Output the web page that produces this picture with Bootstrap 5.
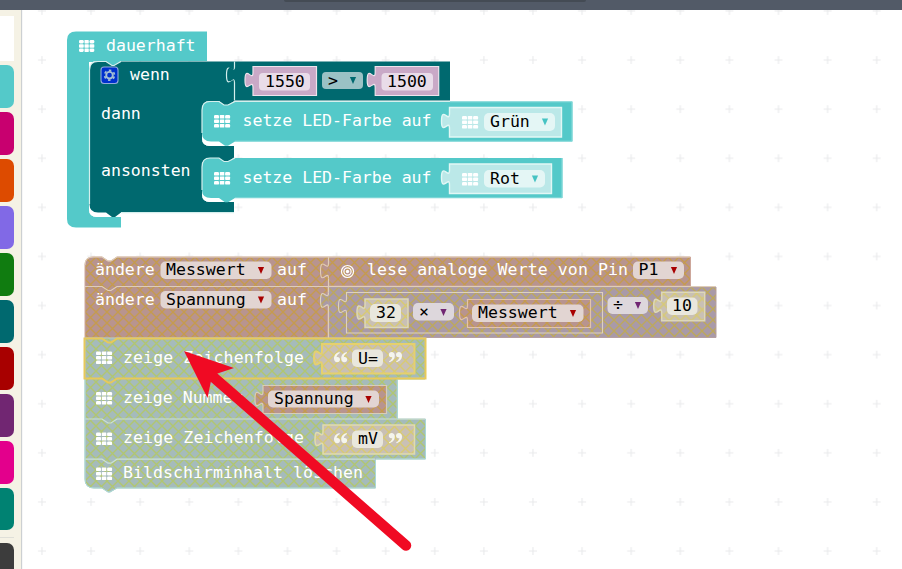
<!DOCTYPE html>
<html lang="de">
<head>
<meta charset="utf-8">
<title>Blockeditor</title>
<link href="https://cdn.jsdelivr.net/npm/bootstrap@5.3.0/dist/css/bootstrap.min.css" rel="stylesheet">
<style>
body{background:#fff}
.topbar{height:10px;background:#525a67;padding-left:284px}
.topbar-tab{width:302px;height:2px;background:#444b54;border-radius:0 0 4px 4px}
.toolbox{width:21px;background:#f5f2e5;box-shadow:1px 0 1px #ccd0d2;padding-top:6px;z-index:1}
.toolbox-search{width:14px;height:45px;margin-bottom:4px;background:#fff}
.cat{width:14px;height:43px;margin-bottom:4px;border-radius:0 7px 7px 0;flex:none}
.c1{background:#54c9c9}.c2{background:#c8006f}.c3{background:#dd4b00}.c4{background:#8169e6}
.c5{background:#107c10}.c6{background:#00696f}.c7{background:#a80000}.c8{background:#712672}
.c9{background:#e3008c}.c10{background:#008272;height:42px}.c11{background:linear-gradient(80deg,#d87a3c 1px,#3c3c3c 2px)}
.rule{width:14px;height:1px;background:#dfdfd8;margin:3px 0 5px;flex:none}
svg text{font-family:"DejaVu Sans Mono",monospace;font-size:16.55px;fill:#fff;white-space:pre}
svg .dark text,svg text.dark{fill:#000}
.teal{fill:#54c9c9}.logic{fill:#00696f}
.pink{fill:#c9a9c7;stroke:#efe3ec;stroke-width:1.2}
.mint{fill:#bbe8e8;stroke:#e2f7f5;stroke-width:1.4}
.edge{fill:none;stroke:#d5efed;stroke-width:1.2}
.hot{fill:none;stroke:#e8c95a;stroke-width:2}
</style>
<script src="https://cdn.jsdelivr.net/npm/bootstrap@5.3.0/dist/js/bootstrap.bundle.min.js"></script>
</head>
<body class="vh-100 overflow-hidden d-flex flex-column">
<header class="topbar d-flex flex-shrink-0"><div class="topbar-tab"></div></header>
<main class="d-flex flex-grow-1 overflow-hidden">
<nav class="toolbox d-flex flex-column flex-shrink-0" aria-label="Kategorien">
<div class="toolbox-search flex-shrink-0"></div>
<div class="cat c1"></div><div class="cat c2"></div><div class="cat c3"></div><div class="cat c4"></div><div class="cat c5"></div><div class="cat c6"></div><div class="cat c7"></div><div class="cat c8"></div><div class="cat c9"></div><div class="cat c10"></div>
<div class="rule"></div><div class="cat c11"></div>
</nav>
<svg class="flex-shrink-0 d-block" width="881" height="559" viewBox="21 10 881 559">
<defs>
<pattern id="grid" x="17.5" y="35.5" width="49.1" height="49.1" patternUnits="userSpaceOnUse"><path d="M20.5 24.5h8M24.5 20.5v8" stroke="#e9eaeb" stroke-width="1.1"/></pattern>
<pattern id="hBrown" x="85" y="257" width="11" height="11" patternUnits="userSpaceOnUse"><rect width="11" height="11" fill="#b8948f"/><path d="M-1 -1L12 12M12 -1L-1 12" stroke="#c59b4e" stroke-width="1.4"/></pattern>
<pattern id="hPurple" x="328" y="287" width="11" height="11" patternUnits="userSpaceOnUse"><rect width="11" height="11" fill="#a99aa8"/><path d="M-1 -1L12 12M12 -1L-1 12" stroke="#bda85c" stroke-width="1.4"/></pattern>
<pattern id="hGreen" x="85" y="338" width="11" height="11" patternUnits="userSpaceOnUse"><rect width="11" height="11" fill="#a5bbbb"/><path d="M-1 -1L12 12M12 -1L-1 12" stroke="#b1c671" stroke-width="1.4"/></pattern>
<pattern id="hSand" x="323" y="344" width="11" height="11" patternUnits="userSpaceOnUse"><rect width="11" height="11" fill="#c9c0b5"/><path d="M-1 -1L12 12M12 -1L-1 12" stroke="#d8ca72" stroke-width="1.4"/></pattern>
<g id="leds" fill="#fff"><rect width="5" height="3.6" rx="1.2"/><rect x="5.8" width="4.5" height="3.6" rx=".5"/><rect x="11.1" width="5" height="3.6" rx="1.2"/><rect y="4.5" width="5" height="3.6" rx=".8"/><rect x="5.8" y="4.5" width="4.5" height="3.6" rx=".5"/><rect x="11.1" y="4.5" width="5" height="3.6" rx=".8"/><rect y="9" width="5" height="3.6" rx="1.2"/><rect x="5.8" y="9" width="4.5" height="3.6" rx=".5"/><rect x="11.1" y="9" width="5" height="3.6" rx="1.2"/></g>
<path id="caret" d="M-3.1 -3.4H3.1L0 3.6Z"/>
<!-- puzzle tab: origin is the block's upper-left corner -->
<path id="tab" d="M0 5.500c0 10 -8 -8 -8 8s8 -2.500 8 7.500"/>
<g id="quotes" fill="#f5f5ee"><path id="q" d="M5.500 0C1.500 1 0 3.500 0 6.600C0 9 1.300 10.200 3.200 10.200C5 10.200 6 9 6 7.500C6 6 5 5 3.500 5C3.100 5 2.800 5 2.600 5.200C2.700 3.500 3.700 2 5.800 .9Z"/><use href="#q" x="7.200"/><g transform="translate(68 10.200) rotate(180)"><use href="#q"/><use href="#q" x="7.200"/></g></g>
</defs>
<rect x="21" y="10" width="881" height="559" fill="url(#grid)"/>

<!-- forever loop -->
<path class="teal" d="M67 40Q67 31.500 76 31.500H207V61H121L114.500 65.500H111.500L106 61H97Q89 61 89 69V209Q89 217 97 217H121V227.500H76Q67 227.500 67 219Z"/>
<use href="#leds" transform="translate(79 40) scale(.95)"/><text x="106" y="51">dauerhaft</text>
<path fill="#fff" d="M89 62V209Q89 217 97 217H107V211H95V62Z"/>
<path class="logic" d="M89.500 70Q89.500 61.500 98 61.500H106L112 65.500H114L121 61.500H450V100.500H235L228 105H224L219 101H210Q202 101 202 110V138Q202 146 210 146H234V157.500L228 162H224L219 158H210Q202 158 202 166V194Q202 202 210 202H234V212.500H121L115 217H112L106 212.500H98Q89.500 212.500 89.500 204Z"/>
<path class="edge" d="M89.500 204V70Q89.500 61.500 98 61.500H106L112 65.500H114L121 61.500M234.500 61.500V67c0 10 -8 -8 -8 8s8 -2.500 8 7.500V100.500M121 212.700H234"/>
<path d="M235 66.500c0 10 -7 -8 -7 8s7 -2.500 7 8.500Z" fill="#00696f"/>
<rect x="101" y="67" width="17" height="16.500" rx="3" fill="#0031cd" stroke="#91a9dc" stroke-width="1.100"/>
<g fill="none" stroke="#a5bfd3"><circle cx="109.500" cy="75.200" r="3.300" stroke-width="1.900"/><circle cx="109.500" cy="75.200" r="4.900" stroke-width="1.700" stroke-dasharray="2.500 2.631" stroke-dashoffset="-1.300"/></g>
<text x="130" y="80">wenn</text><text x="101" y="119">dann</text><text x="101" y="176">ansonsten</text>

<!-- comparison -->
<g class="pink"><path id="num" d="M253 66.500H316.500V95.500H253V87.500c0 -10 -8 8 -8 -7.500s8 2.500 8 -7.500Z"/><use href="#num" x="122.200"/></g>
<rect x="259" y="73" width="51" height="17.500" rx="4" fill="#e9dce9"/><rect x="381.500" y="73" width="51.500" height="17.500" rx="4" fill="#e9dce9"/>
<rect x="322" y="72" width="41" height="17" rx="4" fill="#9ac2c5"/>
<g class="dark"><text x="265" y="87">1550</text><text x="387" y="87">1500</text><text x="328" y="86">&gt;</text></g><use href="#caret" x="353" y="80.500" fill="#00696f"/>

<!-- LED statements -->
<path fill="#fff" d="M202 135V138Q202 146 210 146H234V139ZM202 192V194Q202 202 210 202H234V195Z"/>
<path class="teal" d="M202 110Q202 101.500 210 101.500H219L224 105H228L235 101.500H572.500V141.500H235L228 145.700H225L219 141.500H211Q202 141.500 202 133Z"/>
<path class="teal" d="M202 167Q202 158 210 158H219L224 161.500H228L235 158H562.500V198H235L228 202.200H225L219 198H211Q202 198 202 190Z"/>
<path class="edge" d="M202 133V110Q202 101.500 210 101.500H219L224 105H228L235 101.500H450M202 190V167Q202 158 210 158H219L224 161.500H228L235 158"/>
<path d="M450 101.800H572V141.200H235M562 158V197.800H235" fill="none" stroke="#8adada"/>
<use href="#leds" x="214" y="115"/><use href="#leds" x="214" y="172"/>
<text x="242.500" y="126" textLength="189">setze LED-Farbe auf</text><text x="242.500" y="183" textLength="189">setze LED-Farbe auf</text>
<path class="mint" d="M449.500 107.500H561.500V137H449.500V128.500c0 -10 -8 8 -8 -7.500s8 2.500 8 -7.500Z"/>
<path class="mint" d="M449.500 164H551.500V193.500H449.500V185c0 -10 -8 8 -8 -7.500s8 2.500 8 -7.500Z"/>
<rect x="484" y="113" width="71" height="18" rx="5" fill="#e4f6f5"/><rect x="484" y="170" width="61" height="17.500" rx="5" fill="#e4f6f5"/>
<use href="#leds" x="462" y="116"/><use href="#leds" x="462" y="173"/>
<g class="dark"><text x="490" y="127">Grün</text><text x="490" y="184">Rot</text></g>
<g fill="#45c3c3"><use href="#caret" x="545" y="122"/><use href="#caret" x="535" y="179"/></g>

<!-- disabled stack -->
<path fill="url(#hBrown)" stroke="#cda79b" d="M85 265Q85 257 93 257H102L108 261H111L117 257H690.500V286H328V338H85Z"/>
<path fill="url(#hPurple)" stroke="#b59fa2" d="M328.500 287H716V337.500H328.500Z"/>
<path fill="url(#hGreen)" stroke="#b5cbc4" d="M85 338H425.500V378H397V419H425.500V459H375.500V488H117L110 492H108L102 488H94Q85 488 85 479Z"/>
<g fill="none" stroke="#dfcdb8" stroke-width="1.200"><path d="M85 265Q85 257 93 257H102L108 261H111L117 257H690"/><path d="M85 286.500H102L108 290.500H111L117 286.500H716M328.500 257V263M328.500 278.500V292.500M328.500 308V338"/></g>
<path fill="none" stroke="#cce2d5" stroke-width="1.200" d="M397 379.500H425M85 419H102L108 423H111L117 419H425M85 459.200H102L108 463.200H111L117 459.200H375"/>
<path fill="none" stroke="#a9d8d5" stroke-width="1" d="M85 379V479Q85 488 94 488H102L108 492H110L117 488H375.500V460M397.500 379V419M425.500 419V459H376"/>
<g fill="url(#hBrown)" stroke="#e3cdb5" stroke-width="1.100"><use href="#tab" x="328.500" y="257.500"/></g>
<g fill="url(#hPurple)" stroke="#ded2bd" stroke-width="1.100"><use href="#tab" x="328.500" y="287"/><path d="M346.500 292.500H602.500V333H346.500V313.500c0 -10 -8 8 -8 -7.500s8 2.500 8 -7.500Z"/></g>
<g fill="url(#hSand)" stroke="#ddd8b9" stroke-width="1.500"><path id="sn" d="M365 299H408V327.500H365V320c0 -10 -8 8 -8 -7.500s8 2.500 8 -7.500Z"/><use href="#sn" x="296.700" y="-6.700"/></g>
<path fill="url(#hBrown)" stroke="#e3c4aa" stroke-width="1.200" d="M467.500 299.500H590.500V327.500H467.500V320.500c0 -10 -8 8 -8 -7.500s8 2.500 8 -7.500Z"/>
<g fill="#e2d5d2"><rect x="160.500" y="261.500" width="111" height="17.500" rx="5"/><rect x="160.500" y="291" width="111" height="17.500" rx="5"/><rect x="633" y="261.500" width="51" height="17.500" rx="5"/><rect x="472" y="304.500" width="111.500" height="17.500" rx="5"/></g>
<g fill="#ddd7dc"><rect x="413" y="303" width="41" height="17.500" rx="5"/><rect x="607.500" y="297" width="40.500" height="17" rx="5"/></g>
<g fill="#e9e7dd"><rect x="370" y="304" width="31" height="18" rx="5"/><rect x="667" y="297.500" width="30.500" height="17.500" rx="5"/></g>
<text x="95" y="275">ändere</text><text x="95" y="305">ändere</text><text x="277" y="275">auf</text><text x="277" y="305">auf</text><text x="367" y="275" textLength="261">lese analoge Werte von Pin</text>
<g class="dark"><text x="166" y="275">Messwert</text><text x="166" y="305">Spannung</text><text x="638.500" y="275">P1</text><text x="376" y="318">32</text><text x="419" y="317">×</text><text x="478" y="318">Messwert</text><text x="613" y="310">÷</text><text x="672" y="311">10</text></g>
<g fill="#a80000"><use href="#caret" x="261" y="270.500"/><use href="#caret" x="261" y="300"/><use href="#caret" x="674" y="270.500"/><use href="#caret" x="573" y="313.500"/></g>
<g fill="#712672"><use href="#caret" x="443.500" y="312.500"/><use href="#caret" x="638" y="305.500"/></g>
<g fill="none" stroke="#fff" stroke-width="1.200"><circle cx="347.500" cy="271.500" r="6"/><circle cx="347.500" cy="271.500" r="3.600"/></g><circle cx="347.500" cy="271.500" r="1.700" fill="#fff"/>

<!-- output statements -->
<path class="hot" d="M84.500 338.500H102L108 342.500H111L117 338.500H425.500V378.500H117L111 382.500H108L102 378.500H84.500Z"/>
<path fill="url(#hSand)" stroke="#e6d06d" stroke-width="2" d="M322 344H414.500V373.500H322V365.500c0 -10 -8 8 -8 -7.500s8 2.500 8 -7.500Z"/>
<path fill="url(#hBrown)" stroke="#d8cdb8" stroke-width="1.200" d="M263 385.500H386.500V413.500H263V406.500c0 -10 -8 8 -8 -7.500s8 2.500 8 -7.500Z"/>
<path fill="url(#hSand)" stroke="#e1dcac" stroke-width="1.500" d="M323 425H414.500V454H323V446.500c0 -10 -8 8 -8 -7.500s8 2.500 8 -7.500Z"/>
<rect x="268" y="390.500" width="111" height="17" rx="5" fill="#e2d5d2"/>
<g fill="#e9e7dd"><rect x="352" y="349.500" width="31" height="17.500" rx="5"/><rect x="352" y="430.500" width="31" height="17.500" rx="5"/></g>
<use href="#quotes" x="334" y="352"/><use href="#quotes" x="334" y="433"/>
<use href="#leds" x="96" y="351.500"/><use href="#leds" x="96" y="392"/><use href="#leds" x="96" y="432.500"/><use href="#leds" x="96" y="467.500"/>
<text x="123" y="363" textLength="181">zeige Zeichenfolge</text><text x="123" y="403">zeige Nummer</text><text x="123" y="443" textLength="181">zeige Zeichenfolge</text><text x="123" y="478" textLength="240">Bildschirminhalt löschen</text>
<g class="dark"><text x="358" y="364">U=</text><text x="274" y="404">Spannung</text><text x="358" y="444">mV</text></g><use href="#caret" x="368.500" y="399.500" fill="#a80000"/>

<!-- pointer arrow -->
<path d="M211 375L406 545.500" stroke="#f00a23" stroke-width="10.500" stroke-linecap="round"/><path d="M184 351L234 368L217.500 373.500L211 381L207.500 398Z" fill="#f00a23"/>
</svg>
</main>
</body>
</html>
